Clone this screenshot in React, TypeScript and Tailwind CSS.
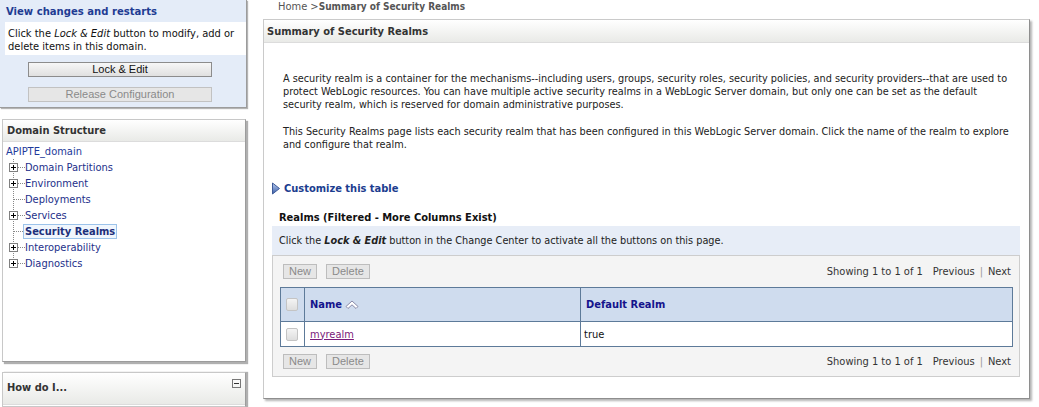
import React from 'react';

const tahoma = "font-['DejaVu_Sans_Condensed','DejaVu_Sans',sans-serif]";
const arial = "font-['Liberation_Sans',Arial,sans-serif]";

const treeItems = [
  { label: 'Domain Partitions', plus: true },
  { label: 'Environment', plus: true },
  { label: 'Deployments', plus: false },
  { label: 'Services', plus: true },
  { label: 'Security Realms', plus: false, selected: true },
  { label: 'Interoperability', plus: true },
  { label: 'Diagnostics', plus: true, last: true },
];

function TreeConnector({ plus, last }: { plus: boolean; last?: boolean }) {
  return (
    <svg width="19" height="16" viewBox="0 0 19 16" className="shrink-0">
      <line x1="7.5" y1="0" x2="7.5" y2={last ? 8 : 16} stroke="#888" strokeDasharray="1 1" />
      <line x1={plus ? 12 : 8} y1="8.5" x2="19" y2="8.5" stroke="#888" strokeDasharray="1 1" />
      {plus && (
        <g>
          <rect x="3.5" y="4.5" width="8" height="8" fill="#fff" stroke="#808080" />
          <line x1="5" y1="8.5" x2="10" y2="8.5" stroke="#000" />
          <line x1="7.5" y1="6" x2="7.5" y2="11" stroke="#000" />
        </g>
      )}
    </svg>
  );
}

function SmallButton({ label }: { label: string }) {
  return (
    <span
      className={`${arial} h-[15px] px-[5px] flex items-center text-[11px] text-[#8a8a8a] bg-[#e6e6e6] border border-[#bdbdbd]`}
    >
      {label}
    </span>
  );
}

function Pager() {
  return (
    <div className="text-[11px] text-[#333] flex items-center">
      <span>Showing 1 to 1 of 1</span>
      <span className="ml-[10px]">Previous</span>
      <span className="mx-[5px] text-[#999]">|</span>
      <span>Next</span>
    </div>
  );
}

function Checkbox() {
  return (
    <span className="block w-[12px] h-[13px] rounded-[2px] border border-[#c4c4c4] bg-gradient-to-b from-[#f4f4f4] to-[#dedede]" />
  );
}

export default function App() {
  return (
    <div className={`${tahoma} w-[1039px] h-[407px] overflow-hidden bg-white flex text-[11px] leading-[13px] text-[#222]`}>
      {/* Left column */}
      <aside className="w-[250px] shrink-0 flex flex-col">
        {/* Change Center */}
        <div className="h-[108px] w-[247px] bg-[#e4ecf8] border-r border-b border-[#9c9c9c] shadow-[1px_1px_1px_#b5b5b5]">
          <div className="h-[22px] pl-[6px] flex items-center text-[11.2px] font-bold text-[#1f3c93]">
            View changes and restarts
          </div>
          <div className="ml-[5px] h-[33px] bg-white pl-[3px] pt-[5px] text-[#111]">
            Click the <i>Lock &amp; Edit</i> button to modify, add or
            <br />
            delete items in this domain.
          </div>
          <div className="mt-[7px] ml-[28px] w-[184px] h-[15px] flex items-center justify-center border border-[#8c8c8c] bg-gradient-to-b from-[#f7f7f7] to-[#e0e0e0] text-[11px] text-[#111]">
            <span className={arial}>Lock &amp; Edit</span>
          </div>
          <div className="mt-[10px] ml-[28px] w-[184px] h-[15px] flex items-center justify-center border border-[#c2c2c2] bg-[#e6e6e6] text-[11px] text-[#8a8a8a]">
            <span className={arial}>Release Configuration</span>
          </div>
        </div>

        {/* Domain Structure */}
        <div className="mt-[11px] ml-[2px] w-[244px] h-[243px] border border-[#c8c8c8] border-r-[#9c9c9c] border-b-[#9c9c9c] shadow-[2px_2px_1px_#b0b0b0] bg-white">
          <div className="h-[22px] pl-[4px] flex items-center text-[11px] font-bold text-[#333] bg-gradient-to-b from-white to-[#e9eae7] border-b border-[#dcdcdc]">
            Domain Structure
          </div>
          <div className="pl-[3px] pt-[1px]">
            <div className="h-[16px] flex items-center text-[#1d3a9a]">APIPTE_domain</div>
            {treeItems.map((it) => (
              <div key={it.label} className="h-[16px] flex items-center">
                <TreeConnector plus={it.plus} last={it.last} />
                {it.selected ? (
                  <span className="-ml-[2px] px-[1px] h-[15px] flex items-center border border-[#9cc3ea] bg-[#f0f6fd] font-bold text-[#1d2f7a]">
                    {it.label}
                  </span>
                ) : (
                  <span className="text-[#1d2f8a]">{it.label}</span>
                )}
              </div>
            ))}
          </div>
        </div>

        {/* How do I */}
        <div className="mt-[10px] ml-[2px] w-[244px] flex-1 border border-[#c8c8c8] border-r-[#9c9c9c] shadow-[2px_0_1px_#b0b0b0] bg-white">
          <div className="h-[32px] pl-[4px] pr-[4px] pt-[8px] flex items-start justify-between text-[11px] font-bold text-[#333] bg-gradient-to-b from-white to-[#e9eae7] border-b border-[#dcdcdc]">
            <span>How do I...</span>
            <span className="mt-[-2px] w-[9px] h-[9px] border border-[#777] flex items-center justify-center">
              <span className="block w-[5px] h-px bg-[#333]" />
            </span>
          </div>
        </div>
      </aside>

      {/* Main */}
      <main className="ml-[13px] w-[767px] flex flex-col">
        <div className="h-[19px] pl-[15px] text-[11px] text-[#555]">
          Home &gt;<b className="text-[10px]">Summary of Security Realms</b>
        </div>
        <div className="w-[767px] h-[380px] border border-[#cacaca] border-r-[#8e8e8e] border-b-[#8e8e8e] shadow-[2px_2px_2px_#b4b4b4] bg-white">
          <div className="h-[23px] pl-[3px] flex items-center text-[11px] font-bold text-[#333] bg-gradient-to-b from-white to-[#e9eae7] border-b border-[#dcdcdc]">
            Summary of Security Realms
          </div>

          <div className="pl-[19px] pr-[12px] pt-[29px] text-[10.8px] text-[#222]">
            <p>
              A security realm is a container for the mechanisms--including users, groups, security roles, security
              policies, and security providers--that are used to protect WebLogic resources. You can have multiple
              active security realms in a WebLogic Server domain, but only one can be set as the default security
              realm, which is reserved for domain administrative purposes.
            </p>
            <p className="mt-[14px]">
              This Security Realms page lists each security realm that has been configured in this WebLogic Server
              domain. Click the name of the realm to explore and configure that realm.
            </p>
          </div>

          <div className="mt-[31px] pl-[7px] flex items-center gap-[3px] text-[11px] font-bold text-[#1c3d8f]">
            <svg width="10" height="13" viewBox="0 0 10 13">
              <defs>
                <linearGradient id="tri" x1="0" y1="0" x2="0" y2="1">
                  <stop offset="0" stopColor="#b9cdf0" />
                  <stop offset="1" stopColor="#3a5da8" />
                </linearGradient>
              </defs>
              <path d="M1.5 1 L8.5 6.5 L1.5 12 Z" fill="url(#tri)" stroke="#3d5a98" strokeWidth="1" />
            </svg>
            <span>Customize this table</span>
          </div>

          <div className="mt-[16px] pl-[15px] text-[11px] font-bold text-[#111]">Realms (Filtered - More Columns Exist)</div>

          <div className="mt-[2px] mx-[8px] w-[748px]">
            <div className="h-[29px] pl-[7px] flex items-center bg-[#e7edf7] text-[10.8px] text-[#222]">
              <span>
                Click the <b><i>Lock &amp; Edit</i></b> button in the Change Center to activate all the buttons on this page.
              </span>
            </div>
            <div className="h-[122px] bg-[#f4f4f4] border border-[#cdcdcd] px-[7px]">
              <div className="h-[31px] flex items-center justify-between pl-[3px] pr-[1px]">
                <div className="flex gap-[9px]">
                  <SmallButton label="New" />
                  <SmallButton label="Delete" />
                </div>
                <Pager />
              </div>
              <table className="w-[733px] border-collapse border border-[#5d7a99]">
                <thead>
                  <tr className="h-[34px] bg-[#cfdcee]">
                    <th className="w-[24px] border border-[#5d7a99] px-[5px]">
                      <Checkbox />
                    </th>
                    <th className="w-[276px] border border-[#5d7a99] pl-[5px] text-left text-[11px] font-bold text-[#14148c]">
                      <span className="flex items-center gap-[3px]">
                        Name
                        <svg width="14" height="10" viewBox="0 0 14 10">
                          <path d="M1 6.5 L7 1 L13 6.5 L11 8.5 L7 4.8 L3 8.5 Z" fill="#fff" stroke="#8a8aa8" strokeWidth="1" />
                        </svg>
                      </span>
                    </th>
                    <th className="border border-[#5d7a99] pl-[5px] text-left text-[11px] font-bold text-[#14148c]">
                      Default Realm
                    </th>
                  </tr>
                </thead>
                <tbody>
                  <tr className="h-[25px] bg-white">
                    <td className="border border-[#5d7a99] px-[5px]">
                      <Checkbox />
                    </td>
                    <td className="border border-[#5d7a99] pl-[5px]">
                      <span className="text-[#7a1a7a] underline">myrealm</span>
                    </td>
                    <td className="border border-[#5d7a99] pl-[3px] text-[#111]">true</td>
                  </tr>
                </tbody>
              </table>
              <div className="h-[28px] flex items-center justify-between pl-[3px] pr-[1px]">
                <div className="flex gap-[9px]">
                  <SmallButton label="New" />
                  <SmallButton label="Delete" />
                </div>
                <Pager />
              </div>
            </div>
          </div>
        </div>
      </main>
    </div>
  );
}
